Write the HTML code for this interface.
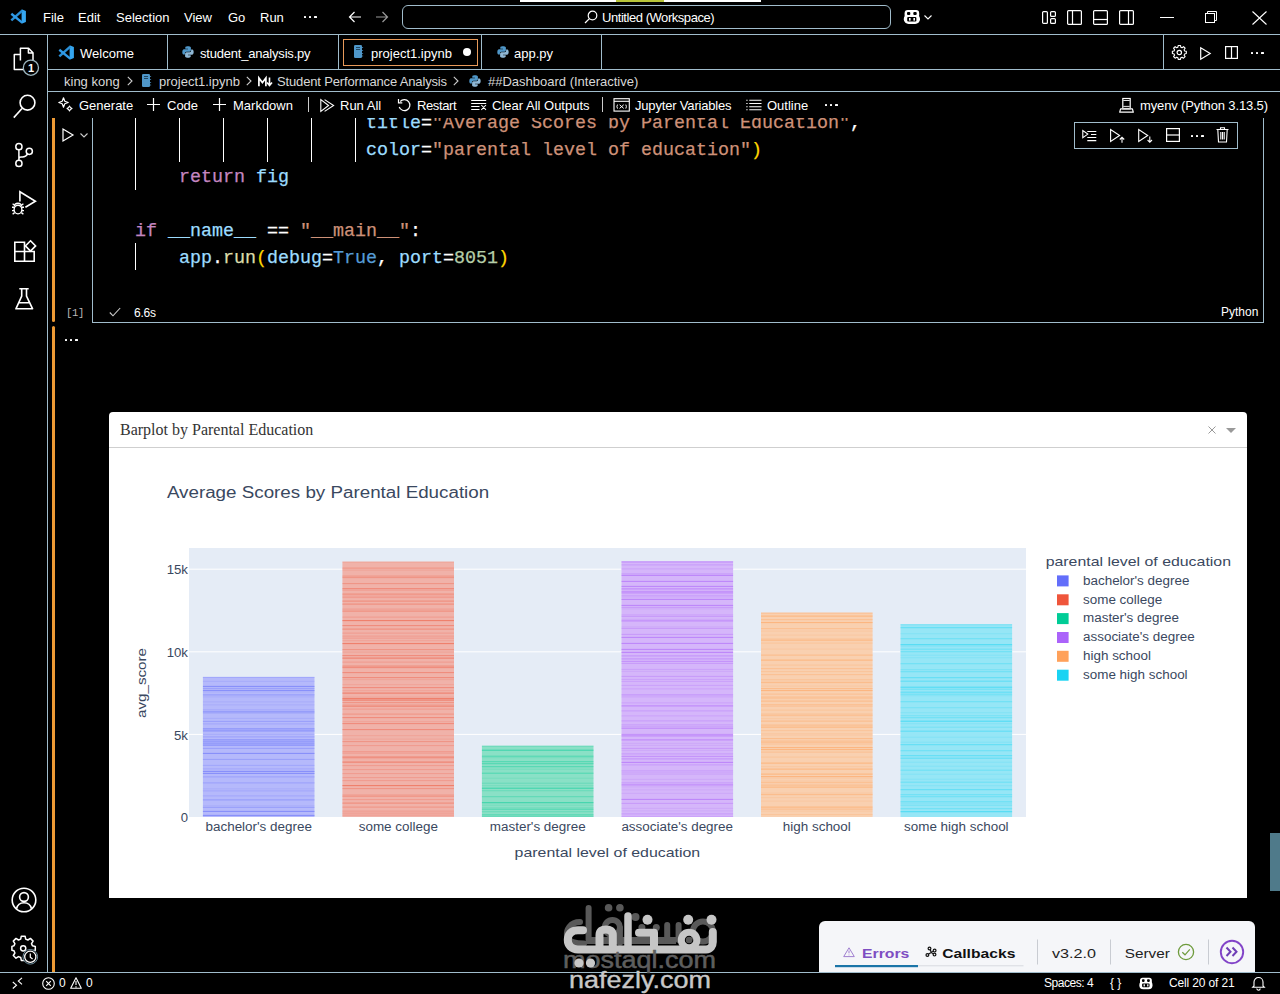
<!DOCTYPE html>
<html><head><meta charset="utf-8">
<style>
*{margin:0;padding:0;box-sizing:border-box}
html,body{width:1280px;height:994px;overflow:hidden;background:#000;font-family:"Liberation Sans",sans-serif;color:#fff}
.a{position:absolute;white-space:nowrap}
.t{font-size:13px;line-height:13px}
.hl{position:absolute;height:1px;background:#a0bccb}
.vl{position:absolute;width:1px;background:#a0bccb}
svg{position:absolute;overflow:visible}
.mono{font-family:"Liberation Mono",monospace}
</style></head><body>
<!-- ===== TITLE BAR ===== -->
<div class="a" style="left:520px;top:0;width:241px;height:2px;background:#fff"></div>
<div class="a" style="left:616px;top:0;width:48px;height:2px;background:#b8c43a"></div>
<svg style="left:10px;top:9px" width="16" height="16" viewBox="0 0 16 16">
 <path d="M11.6 0.3L15.9 2.1V12.9L11.6 14.8Z" fill="#35a6f0"/><path d="M12.2 1.6L1.3 11.3" stroke="#2a8fd6" stroke-width="2.4"/><path d="M12.2 13.6L1.3 4.8" stroke="#2f9ae8" stroke-width="2.4"/>
</svg>
<div class="a t" style="left:43px;top:11px">File</div>
<div class="a t" style="left:78px;top:11px">Edit</div>
<div class="a t" style="left:116px;top:11px">Selection</div>
<div class="a t" style="left:184px;top:11px">View</div>
<div class="a t" style="left:228px;top:11px">Go</div>
<div class="a t" style="left:260px;top:11px">Run</div>
<div class="a" style="left:304.0px;top:16px;width:2.2px;height:2.2px;border-radius:0.5px;background:#fff"></div><div class="a" style="left:309.2px;top:16px;width:2.2px;height:2.2px;border-radius:0.5px;background:#fff"></div><div class="a" style="left:314.4px;top:16px;width:2.2px;height:2.2px;border-radius:0.5px;background:#fff"></div>
<svg style="left:348px;top:11px" width="14" height="12" viewBox="0 0 14 12"><path d="M13 6H1.5M6.5 1L1.5 6L6.5 11" stroke="#fff" stroke-width="1.2" fill="none"/></svg>
<svg style="left:375px;top:11px" width="14" height="12" viewBox="0 0 14 12"><path d="M1 6H12.5M7.5 1L12.5 6L7.5 11" stroke="#9a9a9a" stroke-width="1.2" fill="none"/></svg>
<div class="a" style="left:402px;top:5px;width:489px;height:24px;border:1px solid #a0bccb;border-radius:6px"></div>
<svg style="left:584px;top:10px" width="14" height="14" viewBox="0 0 14 14"><circle cx="8.5" cy="5.5" r="4.3" stroke="#fff" stroke-width="1.2" fill="none"/><path d="M5.4 8.6L1 13" stroke="#fff" stroke-width="1.3"/></svg>
<div class="a t" style="left:602px;top:11px;letter-spacing:-0.45px">Untitled (Workspace)</div>
<!-- copilot -->
<svg style="left:903px;top:9px" width="18" height="16" viewBox="0 0 18 16">
 <rect x="1.6" y="1" width="14.6" height="8" rx="3.2" fill="#fff"/>
 <rect x="0.8" y="5" width="16.2" height="10" rx="4.8" fill="#fff"/>
 <rect x="4" y="2.9" width="3.3" height="3.1" rx="1" fill="#000"/>
 <rect x="10.3" y="2.9" width="3.4" height="3.1" rx="1" fill="#000"/>
 <rect x="4.2" y="8.1" width="9.2" height="4.4" rx="1" fill="#000"/>
 <rect x="6" y="9" width="1.6" height="2.6" fill="#fff"/>
 <rect x="10.4" y="9" width="1.6" height="2.6" fill="#fff"/>
</svg>
<svg style="left:924px;top:15px" width="8" height="5" viewBox="0 0 8 5"><path d="M0.5 0.5L4 4L7.5 0.5" stroke="#fff" stroke-width="1.1" fill="none"/></svg>
<!-- layout icons -->
<svg style="left:1042px;top:11px" width="14" height="13" viewBox="0 0 14 13"><rect x="0.6" y="0.6" width="4.8" height="11.8" rx="1" stroke="#fff" stroke-width="1.2" fill="none"/><rect x="8.6" y="0.6" width="4.8" height="4.8" rx="1" stroke="#fff" stroke-width="1.2" fill="none"/><rect x="8.6" y="7.6" width="4.8" height="4.8" rx="1" stroke="#fff" stroke-width="1.2" fill="none"/></svg>
<svg style="left:1067px;top:10px" width="15" height="15" viewBox="0 0 15 15"><rect x="0.6" y="0.6" width="13.8" height="13.8" rx="1" stroke="#fff" stroke-width="1.2" fill="none"/><path d="M5.5 1V14" stroke="#fff" stroke-width="1.2"/></svg>
<svg style="left:1093px;top:10px" width="15" height="15" viewBox="0 0 15 15"><rect x="0.6" y="0.6" width="13.8" height="13.8" rx="1" stroke="#fff" stroke-width="1.2" fill="none"/><path d="M1 9.5H14" stroke="#fff" stroke-width="1.2"/></svg>
<svg style="left:1119px;top:10px" width="15" height="15" viewBox="0 0 15 15"><rect x="0.6" y="0.6" width="13.8" height="13.8" rx="1" stroke="#fff" stroke-width="1.2" fill="none"/><path d="M9.5 1V14" stroke="#fff" stroke-width="1.2"/></svg>
<!-- window controls -->
<div class="a" style="left:1160px;top:17px;width:14px;height:1px;background:#fff"></div>
<svg style="left:1205px;top:11px" width="12" height="12" viewBox="0 0 12 12"><rect x="0.5" y="2.5" width="9" height="9" stroke="#fff" fill="none"/><path d="M2.5 2.5V0.5H11.5V9.5H9.5" stroke="#fff" fill="none"/></svg>
<svg style="left:1252px;top:11px" width="15" height="14" viewBox="0 0 15 14"><path d="M0.5 0.5L14.5 13.5M14.5 0.5L0.5 13.5" stroke="#fff" stroke-width="1.1"/></svg>

<div class="hl" style="left:0;top:34px;width:1280px"></div>


<!-- ===== ACTIVITY BAR ===== -->
<div class="vl" style="left:47px;top:35px;height:937px"></div>
<!-- explorer -->
<svg style="left:0;top:0" width="48" height="320" viewBox="0 0 48 320">
 <g stroke="#fff" stroke-width="1.5" fill="none" stroke-linejoin="round">
  <path d="M20.4 60.5V48.3H28.6L33 52.7V63M28.4 48.3V52.9H33"/>
  <path d="M20.4 54.4H14.3V69.4H24"/>
 </g>
 <circle cx="30.9" cy="67.7" r="7.6" fill="#000" stroke="#9cb5bf" stroke-width="1.3"/>
 <text x="31" y="71.8" font-size="11" font-family="Liberation Sans" font-weight="bold" fill="#fff" text-anchor="middle">1</text>
 <!-- search -->
 <circle cx="27.5" cy="102.7" r="7.4" stroke="#fff" stroke-width="1.6" fill="none"/>
 <path d="M22 108.5L13.8 117.6" stroke="#fff" stroke-width="1.6"/>
 <!-- scm -->
 <g stroke="#fff" stroke-width="1.5" fill="none">
  <circle cx="18.9" cy="146.7" r="3.1"/><circle cx="18.9" cy="163.4" r="3.1"/><circle cx="29.3" cy="151.3" r="3.1"/>
  <path d="M18.9 149.8V160.3M27.6 153.9C26.5 156 25 156.9 22.5 156.9H21C19.6 156.9 18.9 157.8 18.9 159"/>
 </g>
 <!-- debug -->
 <path d="M19.9 201.5V191.8L35.4 201.3L25.4 207.3" stroke="#fff" stroke-width="1.6" fill="none" stroke-linejoin="miter"/>
 <g stroke="#fff" stroke-width="1.4" fill="none">
  <path d="M14.5 206.2A3.5 3 0 0 1 21.5 206.2"/>
  <ellipse cx="18" cy="209.6" rx="3.9" ry="4.3" fill="#000"/>
  <path d="M12 207.2H14.2M21.8 207.2H24M12 210.6H14M22 210.6H24M12.6 214.2L14.6 212.6M23.4 214.2L21.4 212.6M12.6 203.8L14.6 205.2M23.4 203.8L21.4 205.2"/>
 </g>
 <!-- extensions -->
 <g stroke="#fff" stroke-width="1.6" fill="none" stroke-linejoin="miter">
  <path d="M14.8 242.3H24.5V251.5H34.2V261.3H14.8Z M14.8 251.5H24.5V261.3"/>
  <path d="M30.5 240.8L35.6 245.9L30.5 251L25.4 245.9Z"/>
 </g>
 <!-- testing -->
 <path d="M19.3 288.7H28.7M21.7 288.7V296.1L15.9 308.8H32.6L26.5 296.1V288.7M19.1 302.7H29.4" stroke="#fff" stroke-width="1.6" fill="none" stroke-linejoin="round"/>
</svg>
<!-- account -->
<svg style="left:11px;top:887px" width="26" height="26" viewBox="0 0 26 26">
 <circle cx="13" cy="13" r="11.8" stroke="#fff" stroke-width="1.6" fill="none"/>
 <circle cx="13" cy="10" r="4.4" stroke="#fff" stroke-width="1.6" fill="none"/>
 <path d="M5.5 21.8C6.5 17.5 9 15.8 13 15.8C17 15.8 19.5 17.5 20.5 21.8" stroke="#fff" stroke-width="1.6" fill="none"/>
</svg>
<!-- manage gear -->
<svg style="left:11px;top:935px" width="27" height="31" viewBox="0 0 27 31">
 <path d="M10.3 1.2H14.1L14.7 4.1L16.9 5L19.4 3.4L22.1 6.1L20.5 8.6L21.4 10.8L24.3 11.4V15.2L21.4 15.8L20.5 18L22.1 20.5L19.4 23.2L16.9 21.6L14.7 22.5L14.1 25.4H10.3L9.7 22.5L7.5 21.6L5 23.2L2.3 20.5L3.9 18L3 15.8L0.9 15.2V11.4L3 10.8L3.9 8.6L2.3 6.1L5 3.4L7.5 5L9.7 4.1Z" stroke="#fff" stroke-width="1.5" fill="none" stroke-linejoin="round"/>
 <circle cx="12.2" cy="13.3" r="2.6" stroke="#fff" stroke-width="1.5" fill="none"/>
 <circle cx="19.3" cy="21.8" r="7.3" fill="#000" stroke="#6f8fa0" stroke-width="1"/>
 <circle cx="19.3" cy="21.8" r="5.6" fill="#000" stroke="#fff" stroke-width="1.3"/>
 <path d="M19.3 18.5V22.2L21.6 24" stroke="#fff" stroke-width="1.2" fill="none"/>
</svg>

<!-- ===== TAB BAR ===== -->
<div class="vl" style="left:167px;top:35px;height:34px"></div>
<div class="vl" style="left:338px;top:35px;height:34px"></div>
<div class="vl" style="left:481px;top:35px;height:34px"></div>
<div class="vl" style="left:601px;top:35px;height:34px"></div>
<div class="vl" style="left:1163px;top:35px;height:34px"></div>
<div class="hl" style="left:48px;top:69px;width:1232px"></div>
<svg style="left:58px;top:45px" width="16" height="16" viewBox="0 0 16 16">
 <path d="M11.6 0.3L15.9 2.1V12.9L11.6 14.8Z" fill="#35a6f0"/><path d="M12.2 1.6L1.3 11.3" stroke="#2a8fd6" stroke-width="2.4"/><path d="M12.2 13.6L1.3 4.8" stroke="#2f9ae8" stroke-width="2.4"/>
</svg>
<div class="a t" style="left:80px;top:47px">Welcome</div>
<svg style="left:182px;top:46px" width="12" height="12" viewBox="0 0 12 12">
 <path d="M5.9 0.3C3.2 0.3 3.3 1.5 3.3 1.5V2.8H6V3.2H2.2C2.2 3.2 0.3 3 0.3 5.9C0.3 8.7 1.9 8.6 1.9 8.6H2.9V7.3C2.9 7.3 2.8 5.7 4.5 5.7H7.3C7.3 5.7 8.9 5.7 8.9 4.2V1.8C8.9 1.8 9.1 0.3 5.9 0.3Z" fill="#4f97c9"/>
 <path d="M6.1 11.7C8.8 11.7 8.7 10.5 8.7 10.5V9.2H6V8.8H9.8C9.8 8.8 11.7 9 11.7 6.1C11.7 3.3 10.1 3.4 10.1 3.4H9.1V4.7C9.1 4.7 9.2 6.3 7.5 6.3H4.7C4.7 6.3 3.1 6.3 3.1 7.8V10.2C3.1 10.2 2.9 11.7 6.1 11.7Z" fill="#8fb8d6"/>
</svg>
<div class="a t" style="left:200px;top:47px;letter-spacing:-0.2px">student_analysis.py</div>
<div class="a" style="left:343px;top:39px;width:135px;height:27px;border:1px solid #e89a5a"></div>
<svg style="left:354px;top:45px" width="9" height="13" viewBox="0 0 9 13">
 <rect x="0" y="0" width="8" height="13" rx="1.3" fill="#4f97c9"/>
 <path d="M2 2.5H6M2 4.5H6" stroke="#1c3d55" stroke-width="0.9"/>
 <path d="M8.6 2V3M8.6 5V6M8.6 8V9M8.6 10.5V11.5" stroke="#4f97c9" stroke-width="0.8"/>
</svg>
<div class="a t" style="left:371px;top:47px">project1.ipynb</div>
<div class="a" style="left:463px;top:48px;width:8px;height:8px;border-radius:50%;background:#fff"></div>
<svg style="left:497px;top:46px" width="12" height="12" viewBox="0 0 12 12">
 <path d="M5.9 0.3C3.2 0.3 3.3 1.5 3.3 1.5V2.8H6V3.2H2.2C2.2 3.2 0.3 3 0.3 5.9C0.3 8.7 1.9 8.6 1.9 8.6H2.9V7.3C2.9 7.3 2.8 5.7 4.5 5.7H7.3C7.3 5.7 8.9 5.7 8.9 4.2V1.8C8.9 1.8 9.1 0.3 5.9 0.3Z" fill="#4f97c9"/>
 <path d="M6.1 11.7C8.8 11.7 8.7 10.5 8.7 10.5V9.2H6V8.8H9.8C9.8 8.8 11.7 9 11.7 6.1C11.7 3.3 10.1 3.4 10.1 3.4H9.1V4.7C9.1 4.7 9.2 6.3 7.5 6.3H4.7C4.7 6.3 3.1 6.3 3.1 7.8V10.2C3.1 10.2 2.9 11.7 6.1 11.7Z" fill="#8fb8d6"/>
</svg>
<div class="a t" style="left:514px;top:47px">app.py</div>
<!-- tab actions -->
<svg style="left:1172px;top:45px" width="15" height="15" viewBox="0 0 15 15">
 <path d="M6.3 0.8H8.7L9.1 2.6L10.4 3.2L12 2.1L13.7 3.8L12.6 5.4L13.2 6.7L15 7.1V9.5L13.2 9.9L12.6 11.2L13.7 12.8L12 14.5L10.4 13.4L9.1 14L8.7 15.8H6.3L5.9 14L4.6 13.4L3 14.5L1.3 12.8L2.4 11.2L1.8 9.9L0 9.5V7.1L1.8 6.7L2.4 5.4L1.3 3.8L3 2.1L4.6 3.2L5.9 2.6Z" transform="scale(0.93) translate(0.4,-0.3)" stroke="#fff" stroke-width="1.2" fill="none" stroke-linejoin="round"/>
 <circle cx="7.3" cy="7.5" r="2.2" stroke="#fff" stroke-width="1.2" fill="none"/>
</svg>
<svg style="left:1200px;top:47px" width="11" height="13" viewBox="0 0 11 13"><path d="M0.7 0.8V12.2L10.2 6.5Z" stroke="#fff" stroke-width="1.2" fill="none" stroke-linejoin="miter"/></svg>
<svg style="left:1225px;top:46px" width="13" height="13" viewBox="0 0 13 13"><rect x="0.6" y="0.6" width="11.8" height="11.8" stroke="#fff" stroke-width="1.2" fill="none"/><path d="M6.5 1V12" stroke="#fff" stroke-width="1.2"/></svg>
<div class="a" style="left:1251.0px;top:52px;width:2.2px;height:2.2px;border-radius:0.5px;background:#fff"></div><div class="a" style="left:1256.2px;top:52px;width:2.2px;height:2.2px;border-radius:0.5px;background:#fff"></div><div class="a" style="left:1261.4px;top:52px;width:2.2px;height:2.2px;border-radius:0.5px;background:#fff"></div>

<!-- ===== BREADCRUMBS ===== -->
<div class="hl" style="left:48px;top:91px;width:1232px"></div>
<div class="a t" style="left:64px;top:75px;color:#d8d8d8">king kong</div>
<svg style="left:127px;top:76px" width="6" height="10" viewBox="0 0 6 10"><path d="M0.8 0.8L5 5L0.8 9.2" stroke="#ccc" stroke-width="1.1" fill="none"/></svg>
<svg style="left:142px;top:74px" width="9" height="13" viewBox="0 0 9 13">
 <rect x="0" y="0" width="8" height="13" rx="1.3" fill="#4f97c9"/>
 <path d="M2 2.5H6M2 4.5H6" stroke="#1c3d55" stroke-width="0.9"/>
 <path d="M8.6 2V3M8.6 5V6M8.6 8V9M8.6 10.5V11.5" stroke="#4f97c9" stroke-width="0.8"/>
</svg>
<div class="a t" style="left:159px;top:75px;color:#d8d8d8">project1.ipynb</div>
<svg style="left:246px;top:76px" width="6" height="10" viewBox="0 0 6 10"><path d="M0.8 0.8L5 5L0.8 9.2" stroke="#ccc" stroke-width="1.1" fill="none"/></svg>
<svg style="left:258px;top:77px" width="15" height="10" viewBox="0 0 15 10"><path d="M0.9 9.2V1L4.4 5.5L7.9 1V9.2" stroke="#fff" stroke-width="1.7" fill="none" stroke-linejoin="miter"/><path d="M11.5 0.5V8M9 5.5L11.5 8.5L14 5.5" stroke="#fff" stroke-width="1.6" fill="none"/></svg>
<div class="a t" style="left:277px;top:75px;color:#d8d8d8;letter-spacing:-0.15px">Student Performance Analysis</div>
<svg style="left:453px;top:76px" width="6" height="10" viewBox="0 0 6 10"><path d="M0.8 0.8L5 5L0.8 9.2" stroke="#ccc" stroke-width="1.1" fill="none"/></svg>
<svg style="left:469px;top:75px" width="12" height="12" viewBox="0 0 12 12">
 <path d="M5.9 0.3C3.2 0.3 3.3 1.5 3.3 1.5V2.8H6V3.2H2.2C2.2 3.2 0.3 3 0.3 5.9C0.3 8.7 1.9 8.6 1.9 8.6H2.9V7.3C2.9 7.3 2.8 5.7 4.5 5.7H7.3C7.3 5.7 8.9 5.7 8.9 4.2V1.8C8.9 1.8 9.1 0.3 5.9 0.3Z" fill="#4f97c9"/>
 <path d="M6.1 11.7C8.8 11.7 8.7 10.5 8.7 10.5V9.2H6V8.8H9.8C9.8 8.8 11.7 9 11.7 6.1C11.7 3.3 10.1 3.4 10.1 3.4H9.1V4.7C9.1 4.7 9.2 6.3 7.5 6.3H4.7C4.7 6.3 3.1 6.3 3.1 7.8V10.2C3.1 10.2 2.9 11.7 6.1 11.7Z" fill="#8fb8d6"/>
</svg>
<div class="a t" style="left:488px;top:75px;color:#d8d8d8">##Dashboard (Interactive)</div>


<!-- ===== NOTEBOOK TOOLBAR ===== -->
<svg style="left:58px;top:97px" width="15" height="15" viewBox="0 0 15 15">
 <path d="M5.5 0.8L6.8 4.2L10.2 5.5L6.8 6.8L5.5 10.2L4.2 6.8L0.8 5.5L4.2 4.2Z" stroke="#fff" stroke-width="1.2" fill="none" stroke-linejoin="round"/>
 <path d="M11.5 9L12.4 10.6L14 11.5L12.4 12.4L11.5 14L10.6 12.4L9 11.5L10.6 10.6Z" stroke="#fff" stroke-width="1.1" fill="none" stroke-linejoin="round"/>
</svg>
<div class="a t" style="left:79px;top:99px">Generate</div>
<svg style="left:147px;top:98px" width="13" height="13" viewBox="0 0 13 13"><path d="M6.5 0V13M0 6.5H13" stroke="#fff" stroke-width="1.2"/></svg>
<div class="a t" style="left:167px;top:99px">Code</div>
<svg style="left:213px;top:98px" width="13" height="13" viewBox="0 0 13 13"><path d="M6.5 0V13M0 6.5H13" stroke="#fff" stroke-width="1.2"/></svg>
<div class="a t" style="left:233px;top:99px">Markdown</div>
<div class="vl" style="left:308px;top:97px;height:15px;background:#ccc"></div>
<svg style="left:320px;top:99px" width="15" height="13" viewBox="0 0 15 13"><path d="M0.8 0.6V12.4L8.6 6.5Z M4.6 0.6L13.6 6.5L4.6 12.4" stroke="#fff" stroke-width="1.1" fill="none" stroke-linejoin="miter"/></svg>
<div class="a t" style="left:340px;top:99px">Run All</div>
<svg style="left:397px;top:98px" width="15" height="15" viewBox="0 0 15 15"><path d="M3.2 3.5A5.5 5.5 0 1 1 2.2 9" stroke="#fff" stroke-width="1.2" fill="none"/><path d="M1.5 1V4.8H5.3" stroke="#fff" stroke-width="1.2" fill="none"/></svg>
<div class="a t" style="left:417px;top:99px;letter-spacing:-0.4px">Restart</div>
<svg style="left:0;top:0" width="600" height="130" viewBox="0 0 600 130"><path d="M471.2 100.5H486.2M471.2 103.5H486.2M471.2 106.5H479.5M471.2 109.5H479.5M481.3 105L486 109.8M486 105L481.3 109.8" stroke="#fff" stroke-width="1.05"/></svg>
<div class="a t" style="left:492px;top:99px">Clear All Outputs</div>
<div class="vl" style="left:602px;top:97px;height:15px;background:#ccc"></div>
<svg style="left:0;top:0" width="800" height="130" viewBox="0 0 800 130"><rect x="614" y="98.7" width="15.3" height="12.4" stroke="#fff" stroke-width="1.1" fill="none"/><path d="M614 101.3H629.3" stroke="#fff" stroke-width="1.1"/><path d="M617.5 104.6Q616.3 106.5 617.5 108.6M625.8 104.6Q627 106.5 625.8 108.6M619.6 104.8L623.7 108.4M623.7 104.8L619.6 108.4" stroke="#fff" stroke-width="1" fill="none"/><path d="M746.3 100.3H747.6M746.3 103.5H747.6M746.3 106.7H747.6M746.3 109.8H747.6M749.3 100.3H761.5M749.3 103.5H761.5M749.3 106.7H761.5M749.3 109.8H761.5" stroke="#fff" stroke-width="1.05"/></svg>
<div class="a t" style="left:635px;top:99px;letter-spacing:-0.18px">Jupyter Variables</div>

<div class="a t" style="left:767px;top:99px">Outline</div>
<div class="a" style="left:825.0px;top:104px;width:2.2px;height:2.2px;border-radius:0.5px;background:#fff"></div><div class="a" style="left:830.2px;top:104px;width:2.2px;height:2.2px;border-radius:0.5px;background:#fff"></div><div class="a" style="left:835.4px;top:104px;width:2.2px;height:2.2px;border-radius:0.5px;background:#fff"></div>
<svg style="left:1118px;top:96px" width="17" height="18" viewBox="0 0 17 18"><rect x="4.8" y="2.5" width="7.4" height="10.6" stroke="#fff" stroke-width="1.2" fill="#000"/><path d="M5.3 4.5H11.7M5.3 10.4H11.7M5.3 12.4H11.7" stroke="#fff" stroke-width="0.9"/><path d="M4.3 12.8H2.6L1.7 16.2H15.3L14.4 12.8H12.7" stroke="#fff" stroke-width="1.2" fill="none" stroke-linejoin="round"/></svg>
<div class="a t" style="left:1140px;top:99px;letter-spacing:-0.14px">myenv (Python 3.13.5)</div>

<!-- ===== NOTEBOOK CONTENT ===== -->
<div class="a" style="left:52px;top:118px;width:3px;height:204px;background:#ee9a35;border-radius:0 0 2px 2px"></div>
<div class="a" style="left:52px;top:326px;width:3px;height:646px;background:#ee9a35;border-radius:2px 2px 0 0"></div>
<div class="vl" style="left:92px;top:118px;height:205px"></div>
<div class="vl" style="left:1263px;top:118px;height:205px"></div>
<div class="hl" style="left:92px;top:322px;width:1172px"></div>
<svg style="left:62px;top:128px" width="12" height="14" viewBox="0 0 12 14"><path d="M1 1V13L11 7Z" stroke="#fff" stroke-width="1.2" fill="none"/></svg>
<svg style="left:80px;top:133px" width="8" height="5" viewBox="0 0 8 5"><path d="M0.5 0.5L4 4L7.5 0.5" stroke="#ccc" stroke-width="1.1" fill="none"/></svg>
<!-- indent guides -->
<div class="a" style="left:135px;top:118px;width:1px;height:72px;background:#fff"></div>
<div class="a" style="left:179px;top:118px;width:1px;height:44px;background:#fff"></div>
<div class="a" style="left:223px;top:118px;width:1px;height:44px;background:#fff"></div>
<div class="a" style="left:267px;top:118px;width:1px;height:44px;background:#fff"></div>
<div class="a" style="left:311px;top:118px;width:1px;height:44px;background:#fff"></div>
<div class="a" style="left:355px;top:118px;width:1px;height:44px;background:#fff"></div>
<div class="a" style="left:135px;top:243px;width:1px;height:27px;background:#fff"></div>
<!-- code -->
<div class="a" style="left:93px;top:118px;width:1000px;height:160px;overflow:hidden">
<div class="mono" style="position:absolute;left:42px;top:-8px;font-size:18.33px;-webkit-text-stroke:0.25px currentColor;line-height:27px;white-space:pre;color:#fff"><span>                     </span><span style="color:#9cdcfe">title</span>=<span style="color:#ce9178">"Average Scores by Parental Education"</span>,
<span>                     </span><span style="color:#9cdcfe">color</span>=<span style="color:#ce9178">"parental level of education"</span><span style="color:#ffd700">)</span>
<span>    </span><span style="color:#c586c0">return</span> <span style="color:#9cdcfe">fig</span>

<span style="color:#c586c0">if</span> <span style="color:#9cdcfe">__name__</span> == <span style="color:#ce9178">"__main__"</span>:
<span>    </span><span style="color:#9cdcfe">app</span>.<span style="color:#dcdcaa">run</span><span style="color:#ffd700">(</span><span style="color:#9cdcfe">debug</span>=<span style="color:#569cd6">True</span>, <span style="color:#9cdcfe">port</span>=<span style="color:#b5cea8">8051</span><span style="color:#ffd700">)</span>
</div></div>
<div class="a mono" style="left:66px;top:307px;font-size:10.5px;line-height:12px;color:#bbb;letter-spacing:-0.3px">[1]</div>
<svg style="left:109px;top:307px" width="12" height="10" viewBox="0 0 12 10"><path d="M0.8 5.5L4 8.8L11.2 1" stroke="#ccc" stroke-width="1.1" fill="none"/></svg>
<div class="a" style="left:134px;top:307px;font-size:12px;line-height:12px;color:#fff;letter-spacing:-0.2px">6.6s</div>
<div class="a" style="left:1221px;top:306px;font-size:12px;line-height:12px;color:#fff">Python</div>
<!-- cell toolbar -->
<div class="a" style="left:1074px;top:122px;width:164px;height:27px;border:1px solid #a0bccb;background:#000"></div>
<svg style="left:0;top:0" width="1280" height="160" viewBox="0 0 1280 160">
 <g stroke="#fff" stroke-width="1.1" fill="none" stroke-linejoin="miter">
  <path d="M1082.8 130.6V137.6L1087.8 134.1Z"/>
  <path d="M1087.3 131.5H1096.3M1091 134.5H1096.3M1087.3 137.5H1096.3M1087.3 140.6H1096.3"/>
  <path d="M1110.6 129.6V141.4L1119.6 135.5Z"/>
  <path d="M1122 142.8V137.3M1119.8 139.5L1122 137.2L1124.2 139.5"/>
  <path d="M1138.7 129.6V141.4L1147.7 135.5Z"/>
  <path d="M1149.8 136.5V142.2M1147.6 140L1149.8 142.3L1152 140"/>
 </g>
</svg>
<svg style="left:1166px;top:128px" width="14" height="14" viewBox="0 0 14 14"><rect x="0.6" y="0.6" width="12.8" height="12.8" stroke="#fff" stroke-width="1.2" fill="none"/><path d="M0.6 7H13.4" stroke="#fff" stroke-width="1.2"/></svg>
<div class="a" style="left:1191.0px;top:135px;width:2.2px;height:2.2px;border-radius:0.5px;background:#fff"></div><div class="a" style="left:1196.2px;top:135px;width:2.2px;height:2.2px;border-radius:0.5px;background:#fff"></div><div class="a" style="left:1201.4px;top:135px;width:2.2px;height:2.2px;border-radius:0.5px;background:#fff"></div>
<svg style="left:1216px;top:127px" width="13" height="16" viewBox="0 0 13 16"><path d="M0.5 2.5H12.5M4.5 2.5V0.7H8.5V2.5M1.8 2.5L2.5 15H10.5L11.2 2.5M4.8 5V12.5M6.5 5V12.5M8.2 5V12.5" stroke="#fff" stroke-width="1.1" fill="none"/></svg>
<div class="a" style="left:65.0px;top:339px;width:2.2px;height:2.2px;border-radius:0.5px;background:#fff"></div><div class="a" style="left:70.2px;top:339px;width:2.2px;height:2.2px;border-radius:0.5px;background:#fff"></div><div class="a" style="left:75.4px;top:339px;width:2.2px;height:2.2px;border-radius:0.5px;background:#fff"></div>
<!-- scrollbar -->
<div class="a" style="left:1270px;top:833px;width:10px;height:58px;background:#4f7a8a"></div>


<!-- ===== DASH OUTPUT ===== -->
<div class="a" style="left:109px;top:448px;width:1138px;height:450px;background:#fff"></div>
<div class="a" style="left:109px;top:412px;width:1138px;height:36px;background:#fff;border-radius:4px 4px 0 0;border-bottom:1px solid #cfcfcf"></div>
<div class="a" style="left:120px;top:421px;font-family:'Liberation Serif',serif;font-size:16px;line-height:18px;color:#333">Barplot by Parental Education</div>
<svg style="left:1208px;top:426px" width="8" height="8" viewBox="0 0 8 8"><path d="M0.5 0.5L7.5 7.5M7.5 0.5L0.5 7.5" stroke="#999" stroke-width="1"/></svg>
<svg style="left:1226px;top:428px" width="10" height="5" viewBox="0 0 10 5"><path d="M0 0H10L5 5Z" fill="#999"/></svg>
<!--CHART-->
<svg style="left:0;top:0" width="1280" height="994" viewBox="0 0 1280 994">
<rect x="189" y="548" width="837" height="269" fill="#e5ecf6"/>
<rect x="189" y="733.9" width="837" height="1" fill="#fff"/>
<rect x="189" y="651.3" width="837" height="1" fill="#fff"/>
<rect x="189" y="568.7" width="837" height="1" fill="#fff"/>
<rect x="202.9" y="676.9" width="111.6" height="140.1" fill="#b5b9fb"/>
<rect x="202.9" y="676.9" width="111.6" height="1" fill="#636efa" opacity="0.25"/><rect x="202.9" y="680.9" width="111.6" height="1" fill="#636efa" opacity="0.15"/><rect x="202.9" y="685.9" width="111.6" height="1" fill="#636efa" opacity="0.6"/><rect x="202.9" y="687.9" width="111.6" height="1" fill="#636efa" opacity="0.35"/><rect x="202.9" y="689.9" width="111.6" height="1" fill="#636efa" opacity="0.6"/><rect x="202.9" y="691.4" width="111.6" height="1" fill="#636efa" opacity="0.15"/><rect x="202.9" y="694.4" width="111.6" height="1" fill="#636efa" opacity="0.45"/><rect x="202.9" y="696.4" width="111.6" height="1" fill="#636efa" opacity="0.15"/><rect x="202.9" y="701.4" width="111.6" height="1" fill="#636efa" opacity="0.15"/><rect x="202.9" y="704.4" width="111.6" height="1" fill="#636efa" opacity="0.15"/><rect x="202.9" y="709.4" width="111.6" height="1" fill="#636efa" opacity="0.25"/><rect x="202.9" y="711.4" width="111.6" height="1" fill="#636efa" opacity="0.6"/><rect x="202.9" y="712.9" width="111.6" height="1" fill="#636efa" opacity="0.15"/><rect x="202.9" y="717.9" width="111.6" height="1" fill="#636efa" opacity="0.15"/><rect x="202.9" y="720.9" width="111.6" height="1" fill="#636efa" opacity="0.35"/><rect x="202.9" y="723.4" width="111.6" height="1" fill="#636efa" opacity="0.25"/><rect x="202.9" y="728.4" width="111.6" height="1" fill="#636efa" opacity="0.6"/><rect x="202.9" y="730.4" width="111.6" height="1" fill="#636efa" opacity="0.6"/><rect x="202.9" y="733.9" width="111.6" height="1" fill="#636efa" opacity="0.15"/><rect x="202.9" y="736.4" width="111.6" height="1" fill="#636efa" opacity="0.35"/><rect x="202.9" y="739.4" width="111.6" height="1" fill="#636efa" opacity="0.6"/><rect x="202.9" y="741.4" width="111.6" height="1" fill="#636efa" opacity="0.6"/><rect x="202.9" y="743.4" width="111.6" height="1" fill="#636efa" opacity="0.6"/><rect x="202.9" y="744.9" width="111.6" height="1" fill="#636efa" opacity="0.45"/><rect x="202.9" y="747.9" width="111.6" height="1" fill="#636efa" opacity="0.35"/><rect x="202.9" y="752.9" width="111.6" height="1" fill="#636efa" opacity="0.6"/><rect x="202.9" y="758.9" width="111.6" height="1" fill="#636efa" opacity="0.35"/><rect x="202.9" y="764.9" width="111.6" height="1" fill="#636efa" opacity="0.25"/><rect x="202.9" y="768.4" width="111.6" height="1" fill="#636efa" opacity="0.25"/><rect x="202.9" y="770.9" width="111.6" height="1" fill="#636efa" opacity="0.6"/><rect x="202.9" y="772.9" width="111.6" height="1" fill="#636efa" opacity="0.6"/><rect x="202.9" y="776.4" width="111.6" height="1" fill="#636efa" opacity="0.35"/><rect x="202.9" y="782.4" width="111.6" height="1" fill="#636efa" opacity="0.35"/><rect x="202.9" y="788.4" width="111.6" height="1" fill="#636efa" opacity="0.15"/><rect x="202.9" y="790.4" width="111.6" height="1" fill="#636efa" opacity="0.25"/><rect x="202.9" y="795.4" width="111.6" height="1" fill="#636efa" opacity="0.25"/><rect x="202.9" y="799.4" width="111.6" height="1" fill="#636efa" opacity="0.45"/><rect x="202.9" y="805.4" width="111.6" height="1" fill="#636efa" opacity="0.15"/><rect x="202.9" y="806.9" width="111.6" height="1" fill="#636efa" opacity="0.35"/><rect x="202.9" y="810.9" width="111.6" height="1" fill="#636efa" opacity="0.6"/><rect x="202.9" y="814.9" width="111.6" height="1" fill="#636efa" opacity="0.6"/>
<rect x="342.4" y="561.6" width="111.6" height="255.4" fill="#f0b2a9"/>
<rect x="342.4" y="561.6" width="111.6" height="1" fill="#ef553b" opacity="0.15"/><rect x="342.4" y="567.6" width="111.6" height="1" fill="#ef553b" opacity="0.35"/><rect x="342.4" y="569.6" width="111.6" height="1" fill="#ef553b" opacity="0.15"/><rect x="342.4" y="575.6" width="111.6" height="1" fill="#ef553b" opacity="0.35"/><rect x="342.4" y="577.1" width="111.6" height="1" fill="#ef553b" opacity="0.35"/><rect x="342.4" y="583.1" width="111.6" height="1" fill="#ef553b" opacity="0.35"/><rect x="342.4" y="588.1" width="111.6" height="1" fill="#ef553b" opacity="0.45"/><rect x="342.4" y="589.6" width="111.6" height="1" fill="#ef553b" opacity="0.25"/><rect x="342.4" y="593.6" width="111.6" height="1" fill="#ef553b" opacity="0.45"/><rect x="342.4" y="595.6" width="111.6" height="1" fill="#ef553b" opacity="0.25"/><rect x="342.4" y="597.1" width="111.6" height="1" fill="#ef553b" opacity="0.25"/><rect x="342.4" y="600.6" width="111.6" height="1" fill="#ef553b" opacity="0.45"/><rect x="342.4" y="603.6" width="111.6" height="1" fill="#ef553b" opacity="0.45"/><rect x="342.4" y="608.6" width="111.6" height="1" fill="#ef553b" opacity="0.25"/><rect x="342.4" y="610.6" width="111.6" height="1" fill="#ef553b" opacity="0.45"/><rect x="342.4" y="616.6" width="111.6" height="1" fill="#ef553b" opacity="0.25"/><rect x="342.4" y="620.1" width="111.6" height="1" fill="#ef553b" opacity="0.6"/><rect x="342.4" y="625.1" width="111.6" height="1" fill="#ef553b" opacity="0.45"/><rect x="342.4" y="628.6" width="111.6" height="1" fill="#ef553b" opacity="0.45"/><rect x="342.4" y="632.6" width="111.6" height="1" fill="#ef553b" opacity="0.25"/><rect x="342.4" y="635.6" width="111.6" height="1" fill="#ef553b" opacity="0.25"/><rect x="342.4" y="637.6" width="111.6" height="1" fill="#ef553b" opacity="0.25"/><rect x="342.4" y="640.1" width="111.6" height="1" fill="#ef553b" opacity="0.15"/><rect x="342.4" y="643.1" width="111.6" height="1" fill="#ef553b" opacity="0.6"/><rect x="342.4" y="649.1" width="111.6" height="1" fill="#ef553b" opacity="0.35"/><rect x="342.4" y="651.6" width="111.6" height="1" fill="#ef553b" opacity="0.15"/><rect x="342.4" y="655.1" width="111.6" height="1" fill="#ef553b" opacity="0.45"/><rect x="342.4" y="657.6" width="111.6" height="1" fill="#ef553b" opacity="0.6"/><rect x="342.4" y="661.6" width="111.6" height="1" fill="#ef553b" opacity="0.25"/><rect x="342.4" y="665.6" width="111.6" height="1" fill="#ef553b" opacity="0.45"/><rect x="342.4" y="667.1" width="111.6" height="1" fill="#ef553b" opacity="0.45"/><rect x="342.4" y="672.1" width="111.6" height="1" fill="#ef553b" opacity="0.45"/><rect x="342.4" y="677.1" width="111.6" height="1" fill="#ef553b" opacity="0.45"/><rect x="342.4" y="679.1" width="111.6" height="1" fill="#ef553b" opacity="0.15"/><rect x="342.4" y="684.1" width="111.6" height="1" fill="#ef553b" opacity="0.15"/><rect x="342.4" y="687.1" width="111.6" height="1" fill="#ef553b" opacity="0.45"/><rect x="342.4" y="690.1" width="111.6" height="1" fill="#ef553b" opacity="0.15"/><rect x="342.4" y="692.6" width="111.6" height="1" fill="#ef553b" opacity="0.6"/><rect x="342.4" y="696.6" width="111.6" height="1" fill="#ef553b" opacity="0.15"/><rect x="342.4" y="698.1" width="111.6" height="1" fill="#ef553b" opacity="0.6"/><rect x="342.4" y="699.6" width="111.6" height="1" fill="#ef553b" opacity="0.6"/><rect x="342.4" y="702.1" width="111.6" height="1" fill="#ef553b" opacity="0.35"/><rect x="342.4" y="704.1" width="111.6" height="1" fill="#ef553b" opacity="0.15"/><rect x="342.4" y="705.6" width="111.6" height="1" fill="#ef553b" opacity="0.6"/><rect x="342.4" y="708.6" width="111.6" height="1" fill="#ef553b" opacity="0.25"/><rect x="342.4" y="713.6" width="111.6" height="1" fill="#ef553b" opacity="0.35"/><rect x="342.4" y="717.1" width="111.6" height="1" fill="#ef553b" opacity="0.45"/><rect x="342.4" y="721.1" width="111.6" height="1" fill="#ef553b" opacity="0.15"/><rect x="342.4" y="723.1" width="111.6" height="1" fill="#ef553b" opacity="0.45"/><rect x="342.4" y="729.1" width="111.6" height="1" fill="#ef553b" opacity="0.45"/><rect x="342.4" y="735.1" width="111.6" height="1" fill="#ef553b" opacity="0.15"/><rect x="342.4" y="738.6" width="111.6" height="1" fill="#ef553b" opacity="0.15"/><rect x="342.4" y="741.1" width="111.6" height="1" fill="#ef553b" opacity="0.35"/><rect x="342.4" y="745.1" width="111.6" height="1" fill="#ef553b" opacity="0.25"/><rect x="342.4" y="751.1" width="111.6" height="1" fill="#ef553b" opacity="0.25"/><rect x="342.4" y="752.6" width="111.6" height="1" fill="#ef553b" opacity="0.25"/><rect x="342.4" y="756.6" width="111.6" height="1" fill="#ef553b" opacity="0.6"/><rect x="342.4" y="758.1" width="111.6" height="1" fill="#ef553b" opacity="0.15"/><rect x="342.4" y="761.6" width="111.6" height="1" fill="#ef553b" opacity="0.6"/><rect x="342.4" y="765.1" width="111.6" height="1" fill="#ef553b" opacity="0.25"/><rect x="342.4" y="769.1" width="111.6" height="1" fill="#ef553b" opacity="0.25"/><rect x="342.4" y="773.1" width="111.6" height="1" fill="#ef553b" opacity="0.25"/><rect x="342.4" y="777.1" width="111.6" height="1" fill="#ef553b" opacity="0.25"/><rect x="342.4" y="780.1" width="111.6" height="1" fill="#ef553b" opacity="0.25"/><rect x="342.4" y="785.1" width="111.6" height="1" fill="#ef553b" opacity="0.6"/><rect x="342.4" y="788.1" width="111.6" height="1" fill="#ef553b" opacity="0.35"/><rect x="342.4" y="794.1" width="111.6" height="1" fill="#ef553b" opacity="0.15"/><rect x="342.4" y="795.6" width="111.6" height="1" fill="#ef553b" opacity="0.45"/><rect x="342.4" y="799.1" width="111.6" height="1" fill="#ef553b" opacity="0.25"/><rect x="342.4" y="802.6" width="111.6" height="1" fill="#ef553b" opacity="0.45"/><rect x="342.4" y="806.6" width="111.6" height="1" fill="#ef553b" opacity="0.35"/><rect x="342.4" y="810.6" width="111.6" height="1" fill="#ef553b" opacity="0.25"/><rect x="342.4" y="812.6" width="111.6" height="1" fill="#ef553b" opacity="0.25"/><rect x="342.4" y="814.6" width="111.6" height="1" fill="#ef553b" opacity="0.25"/>
<rect x="481.9" y="745.7" width="111.6" height="71.3" fill="#8ae0c6"/>
<rect x="481.9" y="745.7" width="111.6" height="1" fill="#00cc96" opacity="0.25"/><rect x="481.9" y="749.7" width="111.6" height="1" fill="#00cc96" opacity="0.6"/><rect x="481.9" y="755.7" width="111.6" height="1" fill="#00cc96" opacity="0.45"/><rect x="481.9" y="757.2" width="111.6" height="1" fill="#00cc96" opacity="0.15"/><rect x="481.9" y="761.2" width="111.6" height="1" fill="#00cc96" opacity="0.45"/><rect x="481.9" y="763.2" width="111.6" height="1" fill="#00cc96" opacity="0.45"/><rect x="481.9" y="766.2" width="111.6" height="1" fill="#00cc96" opacity="0.45"/><rect x="481.9" y="768.7" width="111.6" height="1" fill="#00cc96" opacity="0.15"/><rect x="481.9" y="772.7" width="111.6" height="1" fill="#00cc96" opacity="0.45"/><rect x="481.9" y="777.7" width="111.6" height="1" fill="#00cc96" opacity="0.15"/><rect x="481.9" y="782.7" width="111.6" height="1" fill="#00cc96" opacity="0.25"/><rect x="481.9" y="785.2" width="111.6" height="1" fill="#00cc96" opacity="0.15"/><rect x="481.9" y="787.7" width="111.6" height="1" fill="#00cc96" opacity="0.6"/><rect x="481.9" y="790.2" width="111.6" height="1" fill="#00cc96" opacity="0.25"/><rect x="481.9" y="796.2" width="111.6" height="1" fill="#00cc96" opacity="0.35"/><rect x="481.9" y="802.2" width="111.6" height="1" fill="#00cc96" opacity="0.6"/><rect x="481.9" y="804.7" width="111.6" height="1" fill="#00cc96" opacity="0.15"/><rect x="481.9" y="807.2" width="111.6" height="1" fill="#00cc96" opacity="0.15"/><rect x="481.9" y="808.7" width="111.6" height="1" fill="#00cc96" opacity="0.45"/><rect x="481.9" y="811.2" width="111.6" height="1" fill="#00cc96" opacity="0.25"/><rect x="481.9" y="814.2" width="111.6" height="1" fill="#00cc96" opacity="0.35"/><rect x="481.9" y="815.7" width="111.6" height="1" fill="#00cc96" opacity="0.35"/>
<rect x="621.5" y="561.4" width="111.6" height="255.6" fill="#d5b6fa"/>
<rect x="621.5" y="561.4" width="111.6" height="1" fill="#ab63fa" opacity="0.6"/><rect x="621.5" y="564.4" width="111.6" height="1" fill="#ab63fa" opacity="0.35"/><rect x="621.5" y="568.4" width="111.6" height="1" fill="#ab63fa" opacity="0.25"/><rect x="621.5" y="573.4" width="111.6" height="1" fill="#ab63fa" opacity="0.35"/><rect x="621.5" y="574.9" width="111.6" height="1" fill="#ab63fa" opacity="0.6"/><rect x="621.5" y="580.9" width="111.6" height="1" fill="#ab63fa" opacity="0.6"/><rect x="621.5" y="585.9" width="111.6" height="1" fill="#ab63fa" opacity="0.6"/><rect x="621.5" y="588.4" width="111.6" height="1" fill="#ab63fa" opacity="0.6"/><rect x="621.5" y="590.9" width="111.6" height="1" fill="#ab63fa" opacity="0.45"/><rect x="621.5" y="592.4" width="111.6" height="1" fill="#ab63fa" opacity="0.6"/><rect x="621.5" y="594.9" width="111.6" height="1" fill="#ab63fa" opacity="0.25"/><rect x="621.5" y="596.4" width="111.6" height="1" fill="#ab63fa" opacity="0.25"/><rect x="621.5" y="598.9" width="111.6" height="1" fill="#ab63fa" opacity="0.6"/><rect x="621.5" y="604.9" width="111.6" height="1" fill="#ab63fa" opacity="0.6"/><rect x="621.5" y="606.9" width="111.6" height="1" fill="#ab63fa" opacity="0.35"/><rect x="621.5" y="608.4" width="111.6" height="1" fill="#ab63fa" opacity="0.15"/><rect x="621.5" y="614.4" width="111.6" height="1" fill="#ab63fa" opacity="0.25"/><rect x="621.5" y="615.9" width="111.6" height="1" fill="#ab63fa" opacity="0.35"/><rect x="621.5" y="618.9" width="111.6" height="1" fill="#ab63fa" opacity="0.15"/><rect x="621.5" y="620.4" width="111.6" height="1" fill="#ab63fa" opacity="0.6"/><rect x="621.5" y="626.4" width="111.6" height="1" fill="#ab63fa" opacity="0.15"/><rect x="621.5" y="627.9" width="111.6" height="1" fill="#ab63fa" opacity="0.35"/><rect x="621.5" y="633.9" width="111.6" height="1" fill="#ab63fa" opacity="0.35"/><rect x="621.5" y="636.9" width="111.6" height="1" fill="#ab63fa" opacity="0.6"/><rect x="621.5" y="642.9" width="111.6" height="1" fill="#ab63fa" opacity="0.6"/><rect x="621.5" y="648.9" width="111.6" height="1" fill="#ab63fa" opacity="0.6"/><rect x="621.5" y="651.9" width="111.6" height="1" fill="#ab63fa" opacity="0.6"/><rect x="621.5" y="655.4" width="111.6" height="1" fill="#ab63fa" opacity="0.45"/><rect x="621.5" y="658.4" width="111.6" height="1" fill="#ab63fa" opacity="0.45"/><rect x="621.5" y="660.9" width="111.6" height="1" fill="#ab63fa" opacity="0.45"/><rect x="621.5" y="662.9" width="111.6" height="1" fill="#ab63fa" opacity="0.35"/><rect x="621.5" y="668.9" width="111.6" height="1" fill="#ab63fa" opacity="0.25"/><rect x="621.5" y="670.9" width="111.6" height="1" fill="#ab63fa" opacity="0.15"/><rect x="621.5" y="675.9" width="111.6" height="1" fill="#ab63fa" opacity="0.35"/><rect x="621.5" y="678.9" width="111.6" height="1" fill="#ab63fa" opacity="0.25"/><rect x="621.5" y="680.9" width="111.6" height="1" fill="#ab63fa" opacity="0.25"/><rect x="621.5" y="684.9" width="111.6" height="1" fill="#ab63fa" opacity="0.25"/><rect x="621.5" y="688.4" width="111.6" height="1" fill="#ab63fa" opacity="0.25"/><rect x="621.5" y="694.4" width="111.6" height="1" fill="#ab63fa" opacity="0.45"/><rect x="621.5" y="696.4" width="111.6" height="1" fill="#ab63fa" opacity="0.25"/><rect x="621.5" y="702.4" width="111.6" height="1" fill="#ab63fa" opacity="0.25"/><rect x="621.5" y="705.4" width="111.6" height="1" fill="#ab63fa" opacity="0.6"/><rect x="621.5" y="710.4" width="111.6" height="1" fill="#ab63fa" opacity="0.35"/><rect x="621.5" y="715.4" width="111.6" height="1" fill="#ab63fa" opacity="0.25"/><rect x="621.5" y="720.4" width="111.6" height="1" fill="#ab63fa" opacity="0.35"/><rect x="621.5" y="724.4" width="111.6" height="1" fill="#ab63fa" opacity="0.35"/><rect x="621.5" y="726.4" width="111.6" height="1" fill="#ab63fa" opacity="0.35"/><rect x="621.5" y="727.9" width="111.6" height="1" fill="#ab63fa" opacity="0.45"/><rect x="621.5" y="733.9" width="111.6" height="1" fill="#ab63fa" opacity="0.45"/><rect x="621.5" y="735.4" width="111.6" height="1" fill="#ab63fa" opacity="0.6"/><rect x="621.5" y="739.4" width="111.6" height="1" fill="#ab63fa" opacity="0.6"/><rect x="621.5" y="742.9" width="111.6" height="1" fill="#ab63fa" opacity="0.15"/><rect x="621.5" y="744.9" width="111.6" height="1" fill="#ab63fa" opacity="0.15"/><rect x="621.5" y="747.9" width="111.6" height="1" fill="#ab63fa" opacity="0.35"/><rect x="621.5" y="749.9" width="111.6" height="1" fill="#ab63fa" opacity="0.15"/><rect x="621.5" y="753.4" width="111.6" height="1" fill="#ab63fa" opacity="0.35"/><rect x="621.5" y="755.9" width="111.6" height="1" fill="#ab63fa" opacity="0.45"/><rect x="621.5" y="758.4" width="111.6" height="1" fill="#ab63fa" opacity="0.45"/><rect x="621.5" y="761.9" width="111.6" height="1" fill="#ab63fa" opacity="0.6"/><rect x="621.5" y="764.4" width="111.6" height="1" fill="#ab63fa" opacity="0.35"/><rect x="621.5" y="770.4" width="111.6" height="1" fill="#ab63fa" opacity="0.35"/><rect x="621.5" y="772.4" width="111.6" height="1" fill="#ab63fa" opacity="0.25"/><rect x="621.5" y="773.9" width="111.6" height="1" fill="#ab63fa" opacity="0.15"/><rect x="621.5" y="778.9" width="111.6" height="1" fill="#ab63fa" opacity="0.15"/><rect x="621.5" y="782.4" width="111.6" height="1" fill="#ab63fa" opacity="0.35"/><rect x="621.5" y="784.4" width="111.6" height="1" fill="#ab63fa" opacity="0.6"/><rect x="621.5" y="786.4" width="111.6" height="1" fill="#ab63fa" opacity="0.15"/><rect x="621.5" y="789.4" width="111.6" height="1" fill="#ab63fa" opacity="0.15"/><rect x="621.5" y="792.9" width="111.6" height="1" fill="#ab63fa" opacity="0.15"/><rect x="621.5" y="798.9" width="111.6" height="1" fill="#ab63fa" opacity="0.6"/><rect x="621.5" y="802.9" width="111.6" height="1" fill="#ab63fa" opacity="0.35"/><rect x="621.5" y="807.9" width="111.6" height="1" fill="#ab63fa" opacity="0.15"/><rect x="621.5" y="810.4" width="111.6" height="1" fill="#ab63fa" opacity="0.15"/><rect x="621.5" y="813.4" width="111.6" height="1" fill="#ab63fa" opacity="0.35"/><rect x="621.5" y="815.9" width="111.6" height="1" fill="#ab63fa" opacity="0.25"/>
<rect x="761.0" y="612.6" width="111.6" height="204.4" fill="#f9d0b0"/>
<rect x="761.0" y="612.6" width="111.6" height="1" fill="#ffa15a" opacity="0.35"/><rect x="761.0" y="615.6" width="111.6" height="1" fill="#ffa15a" opacity="0.6"/><rect x="761.0" y="619.1" width="111.6" height="1" fill="#ffa15a" opacity="0.35"/><rect x="761.0" y="622.1" width="111.6" height="1" fill="#ffa15a" opacity="0.6"/><rect x="761.0" y="628.1" width="111.6" height="1" fill="#ffa15a" opacity="0.35"/><rect x="761.0" y="630.6" width="111.6" height="1" fill="#ffa15a" opacity="0.15"/><rect x="761.0" y="634.6" width="111.6" height="1" fill="#ffa15a" opacity="0.15"/><rect x="761.0" y="638.1" width="111.6" height="1" fill="#ffa15a" opacity="0.15"/><rect x="761.0" y="639.6" width="111.6" height="1" fill="#ffa15a" opacity="0.6"/><rect x="761.0" y="642.6" width="111.6" height="1" fill="#ffa15a" opacity="0.25"/><rect x="761.0" y="648.6" width="111.6" height="1" fill="#ffa15a" opacity="0.15"/><rect x="761.0" y="654.6" width="111.6" height="1" fill="#ffa15a" opacity="0.45"/><rect x="761.0" y="659.6" width="111.6" height="1" fill="#ffa15a" opacity="0.6"/><rect x="761.0" y="664.6" width="111.6" height="1" fill="#ffa15a" opacity="0.25"/><rect x="761.0" y="668.1" width="111.6" height="1" fill="#ffa15a" opacity="0.35"/><rect x="761.0" y="671.1" width="111.6" height="1" fill="#ffa15a" opacity="0.25"/><rect x="761.0" y="674.1" width="111.6" height="1" fill="#ffa15a" opacity="0.35"/><rect x="761.0" y="679.1" width="111.6" height="1" fill="#ffa15a" opacity="0.25"/><rect x="761.0" y="680.6" width="111.6" height="1" fill="#ffa15a" opacity="0.15"/><rect x="761.0" y="682.1" width="111.6" height="1" fill="#ffa15a" opacity="0.45"/><rect x="761.0" y="685.6" width="111.6" height="1" fill="#ffa15a" opacity="0.15"/><rect x="761.0" y="688.1" width="111.6" height="1" fill="#ffa15a" opacity="0.45"/><rect x="761.0" y="690.1" width="111.6" height="1" fill="#ffa15a" opacity="0.6"/><rect x="761.0" y="693.6" width="111.6" height="1" fill="#ffa15a" opacity="0.35"/><rect x="761.0" y="696.6" width="111.6" height="1" fill="#ffa15a" opacity="0.45"/><rect x="761.0" y="698.1" width="111.6" height="1" fill="#ffa15a" opacity="0.25"/><rect x="761.0" y="700.6" width="111.6" height="1" fill="#ffa15a" opacity="0.45"/><rect x="761.0" y="704.1" width="111.6" height="1" fill="#ffa15a" opacity="0.35"/><rect x="761.0" y="705.6" width="111.6" height="1" fill="#ffa15a" opacity="0.35"/><rect x="761.0" y="709.6" width="111.6" height="1" fill="#ffa15a" opacity="0.25"/><rect x="761.0" y="713.6" width="111.6" height="1" fill="#ffa15a" opacity="0.35"/><rect x="761.0" y="715.1" width="111.6" height="1" fill="#ffa15a" opacity="0.35"/><rect x="761.0" y="718.1" width="111.6" height="1" fill="#ffa15a" opacity="0.15"/><rect x="761.0" y="720.6" width="111.6" height="1" fill="#ffa15a" opacity="0.45"/><rect x="761.0" y="724.6" width="111.6" height="1" fill="#ffa15a" opacity="0.45"/><rect x="761.0" y="726.6" width="111.6" height="1" fill="#ffa15a" opacity="0.6"/><rect x="761.0" y="730.1" width="111.6" height="1" fill="#ffa15a" opacity="0.25"/><rect x="761.0" y="733.1" width="111.6" height="1" fill="#ffa15a" opacity="0.15"/><rect x="761.0" y="734.6" width="111.6" height="1" fill="#ffa15a" opacity="0.15"/><rect x="761.0" y="738.1" width="111.6" height="1" fill="#ffa15a" opacity="0.45"/><rect x="761.0" y="740.6" width="111.6" height="1" fill="#ffa15a" opacity="0.45"/><rect x="761.0" y="742.1" width="111.6" height="1" fill="#ffa15a" opacity="0.35"/><rect x="761.0" y="743.6" width="111.6" height="1" fill="#ffa15a" opacity="0.25"/><rect x="761.0" y="747.1" width="111.6" height="1" fill="#ffa15a" opacity="0.6"/><rect x="761.0" y="749.1" width="111.6" height="1" fill="#ffa15a" opacity="0.6"/><rect x="761.0" y="751.6" width="111.6" height="1" fill="#ffa15a" opacity="0.35"/><rect x="761.0" y="756.6" width="111.6" height="1" fill="#ffa15a" opacity="0.25"/><rect x="761.0" y="762.6" width="111.6" height="1" fill="#ffa15a" opacity="0.6"/><rect x="761.0" y="766.1" width="111.6" height="1" fill="#ffa15a" opacity="0.15"/><rect x="761.0" y="768.6" width="111.6" height="1" fill="#ffa15a" opacity="0.6"/><rect x="761.0" y="773.6" width="111.6" height="1" fill="#ffa15a" opacity="0.6"/><rect x="761.0" y="776.1" width="111.6" height="1" fill="#ffa15a" opacity="0.6"/><rect x="761.0" y="777.6" width="111.6" height="1" fill="#ffa15a" opacity="0.15"/><rect x="761.0" y="780.6" width="111.6" height="1" fill="#ffa15a" opacity="0.15"/><rect x="761.0" y="782.1" width="111.6" height="1" fill="#ffa15a" opacity="0.35"/><rect x="761.0" y="784.6" width="111.6" height="1" fill="#ffa15a" opacity="0.45"/><rect x="761.0" y="786.6" width="111.6" height="1" fill="#ffa15a" opacity="0.6"/><rect x="761.0" y="792.6" width="111.6" height="1" fill="#ffa15a" opacity="0.15"/><rect x="761.0" y="794.1" width="111.6" height="1" fill="#ffa15a" opacity="0.45"/><rect x="761.0" y="797.1" width="111.6" height="1" fill="#ffa15a" opacity="0.15"/><rect x="761.0" y="800.6" width="111.6" height="1" fill="#ffa15a" opacity="0.15"/><rect x="761.0" y="806.6" width="111.6" height="1" fill="#ffa15a" opacity="0.6"/><rect x="761.0" y="808.6" width="111.6" height="1" fill="#ffa15a" opacity="0.45"/><rect x="761.0" y="810.6" width="111.6" height="1" fill="#ffa15a" opacity="0.15"/><rect x="761.0" y="814.1" width="111.6" height="1" fill="#ffa15a" opacity="0.25"/>
<rect x="900.5" y="624.2" width="111.6" height="192.8" fill="#96e6f6"/>
<rect x="900.5" y="624.2" width="111.6" height="1" fill="#19d3f3" opacity="0.25"/><rect x="900.5" y="627.2" width="111.6" height="1" fill="#19d3f3" opacity="0.45"/><rect x="900.5" y="633.2" width="111.6" height="1" fill="#19d3f3" opacity="0.15"/><rect x="900.5" y="638.2" width="111.6" height="1" fill="#19d3f3" opacity="0.35"/><rect x="900.5" y="644.2" width="111.6" height="1" fill="#19d3f3" opacity="0.6"/><rect x="900.5" y="645.7" width="111.6" height="1" fill="#19d3f3" opacity="0.15"/><rect x="900.5" y="648.7" width="111.6" height="1" fill="#19d3f3" opacity="0.35"/><rect x="900.5" y="651.2" width="111.6" height="1" fill="#19d3f3" opacity="0.35"/><rect x="900.5" y="654.7" width="111.6" height="1" fill="#19d3f3" opacity="0.15"/><rect x="900.5" y="657.2" width="111.6" height="1" fill="#19d3f3" opacity="0.15"/><rect x="900.5" y="663.2" width="111.6" height="1" fill="#19d3f3" opacity="0.35"/><rect x="900.5" y="669.2" width="111.6" height="1" fill="#19d3f3" opacity="0.25"/><rect x="900.5" y="671.2" width="111.6" height="1" fill="#19d3f3" opacity="0.35"/><rect x="900.5" y="677.2" width="111.6" height="1" fill="#19d3f3" opacity="0.45"/><rect x="900.5" y="680.7" width="111.6" height="1" fill="#19d3f3" opacity="0.45"/><rect x="900.5" y="686.7" width="111.6" height="1" fill="#19d3f3" opacity="0.6"/><rect x="900.5" y="688.7" width="111.6" height="1" fill="#19d3f3" opacity="0.35"/><rect x="900.5" y="691.7" width="111.6" height="1" fill="#19d3f3" opacity="0.45"/><rect x="900.5" y="693.7" width="111.6" height="1" fill="#19d3f3" opacity="0.35"/><rect x="900.5" y="695.2" width="111.6" height="1" fill="#19d3f3" opacity="0.15"/><rect x="900.5" y="701.2" width="111.6" height="1" fill="#19d3f3" opacity="0.35"/><rect x="900.5" y="707.2" width="111.6" height="1" fill="#19d3f3" opacity="0.25"/><rect x="900.5" y="712.2" width="111.6" height="1" fill="#19d3f3" opacity="0.15"/><rect x="900.5" y="715.2" width="111.6" height="1" fill="#19d3f3" opacity="0.25"/><rect x="900.5" y="717.2" width="111.6" height="1" fill="#19d3f3" opacity="0.35"/><rect x="900.5" y="720.7" width="111.6" height="1" fill="#19d3f3" opacity="0.6"/><rect x="900.5" y="723.2" width="111.6" height="1" fill="#19d3f3" opacity="0.15"/><rect x="900.5" y="726.7" width="111.6" height="1" fill="#19d3f3" opacity="0.25"/><rect x="900.5" y="730.7" width="111.6" height="1" fill="#19d3f3" opacity="0.45"/><rect x="900.5" y="736.7" width="111.6" height="1" fill="#19d3f3" opacity="0.15"/><rect x="900.5" y="741.7" width="111.6" height="1" fill="#19d3f3" opacity="0.15"/><rect x="900.5" y="744.2" width="111.6" height="1" fill="#19d3f3" opacity="0.45"/><rect x="900.5" y="750.2" width="111.6" height="1" fill="#19d3f3" opacity="0.35"/><rect x="900.5" y="755.2" width="111.6" height="1" fill="#19d3f3" opacity="0.45"/><rect x="900.5" y="757.7" width="111.6" height="1" fill="#19d3f3" opacity="0.45"/><rect x="900.5" y="761.7" width="111.6" height="1" fill="#19d3f3" opacity="0.15"/><rect x="900.5" y="765.7" width="111.6" height="1" fill="#19d3f3" opacity="0.15"/><rect x="900.5" y="769.7" width="111.6" height="1" fill="#19d3f3" opacity="0.35"/><rect x="900.5" y="773.7" width="111.6" height="1" fill="#19d3f3" opacity="0.15"/><rect x="900.5" y="778.7" width="111.6" height="1" fill="#19d3f3" opacity="0.15"/><rect x="900.5" y="781.7" width="111.6" height="1" fill="#19d3f3" opacity="0.35"/><rect x="900.5" y="785.2" width="111.6" height="1" fill="#19d3f3" opacity="0.15"/><rect x="900.5" y="789.2" width="111.6" height="1" fill="#19d3f3" opacity="0.45"/><rect x="900.5" y="794.2" width="111.6" height="1" fill="#19d3f3" opacity="0.35"/><rect x="900.5" y="796.2" width="111.6" height="1" fill="#19d3f3" opacity="0.35"/><rect x="900.5" y="801.2" width="111.6" height="1" fill="#19d3f3" opacity="0.35"/><rect x="900.5" y="802.7" width="111.6" height="1" fill="#19d3f3" opacity="0.15"/><rect x="900.5" y="804.7" width="111.6" height="1" fill="#19d3f3" opacity="0.25"/><rect x="900.5" y="808.2" width="111.6" height="1" fill="#19d3f3" opacity="0.35"/><rect x="900.5" y="811.2" width="111.6" height="1" fill="#19d3f3" opacity="0.6"/>
<g font-family="Liberation Sans"><text x="166.9" y="497.8" font-size="16" textLength="322.3" lengthAdjust="spacingAndGlyphs" fill="#3a4860" >Average Scores by Parental Education</text><text x="180.7" y="822.1" font-size="12" textLength="7.3" lengthAdjust="spacingAndGlyphs" fill="#3a4860" >0</text><text x="174.0" y="739.5" font-size="12" textLength="14.0" lengthAdjust="spacingAndGlyphs" fill="#3a4860" >5k</text><text x="166.7" y="656.9" font-size="12" textLength="21.3" lengthAdjust="spacingAndGlyphs" fill="#3a4860" >10k</text><text x="166.7" y="574.3" font-size="12" textLength="21.3" lengthAdjust="spacingAndGlyphs" fill="#3a4860" >15k</text><text x="205.5" y="830.7" font-size="12" textLength="106.4" lengthAdjust="spacingAndGlyphs" fill="#3a4860" >bachelor&#39;s degree</text><text x="358.7" y="830.7" font-size="12" textLength="79.2" lengthAdjust="spacingAndGlyphs" fill="#3a4860" >some college</text><text x="489.8" y="830.7" font-size="12" textLength="95.9" lengthAdjust="spacingAndGlyphs" fill="#3a4860" >master&#39;s degree</text><text x="621.4" y="830.7" font-size="12" textLength="111.6" lengthAdjust="spacingAndGlyphs" fill="#3a4860" >associate&#39;s degree</text><text x="782.8" y="830.7" font-size="12" textLength="68.0" lengthAdjust="spacingAndGlyphs" fill="#3a4860" >high school</text><text x="904.0" y="830.7" font-size="12" textLength="104.6" lengthAdjust="spacingAndGlyphs" fill="#3a4860" >some high school</text><text x="514.6" y="857.1" font-size="13.5" textLength="185.6" lengthAdjust="spacingAndGlyphs" fill="#3a4860" >parental level of education</text><text x="1045.7" y="565.8" font-size="13.5" textLength="185.3" lengthAdjust="spacingAndGlyphs" fill="#3a4860" >parental level of education</text><rect x="1057" y="575.4" width="11.6" height="11" fill="#636efa"/><text x="1083.0" y="584.7" font-size="12" textLength="106.4" lengthAdjust="spacingAndGlyphs" fill="#3a4860" >bachelor&#39;s degree</text><rect x="1057" y="594.3" width="11.6" height="11" fill="#ef553b"/><text x="1083.0" y="603.6" font-size="12" textLength="79.2" lengthAdjust="spacingAndGlyphs" fill="#3a4860" >some college</text><rect x="1057" y="613.1" width="11.6" height="11" fill="#00cc96"/><text x="1083.0" y="622.4" font-size="12" textLength="95.9" lengthAdjust="spacingAndGlyphs" fill="#3a4860" >master&#39;s degree</text><rect x="1057" y="632.0" width="11.6" height="11" fill="#ab63fa"/><text x="1083.0" y="641.3" font-size="12" textLength="111.6" lengthAdjust="spacingAndGlyphs" fill="#3a4860" >associate&#39;s degree</text><rect x="1057" y="650.8" width="11.6" height="11" fill="#ffa15a"/><text x="1083.0" y="660.1" font-size="12" textLength="68.0" lengthAdjust="spacingAndGlyphs" fill="#3a4860" >high school</text><rect x="1057" y="669.7" width="11.6" height="11" fill="#19d3f3"/><text x="1083.0" y="679.0" font-size="12" textLength="104.6" lengthAdjust="spacingAndGlyphs" fill="#3a4860" >some high school</text><text transform="translate(146,683) rotate(-90)" x="-35.0" y="0" font-size="13.5" textLength="70" lengthAdjust="spacingAndGlyphs" fill="#3a4860">avg_score</text></g></svg>
<!--/CHART-->


<!-- ===== DASH DEBUG PANEL ===== -->
<div class="a" style="left:819px;top:921px;width:436px;height:51px;background:#f5f6f9;border-radius:6px 6px 0 0"></div>
<svg style="left:0;top:0" width="1280" height="994" viewBox="0 0 1280 994">
 <path d="M849 947.8L854.3 956.6H843.7Z M849 950.5V953.3M849 954.6V955.3" stroke="#a07fd0" stroke-width="1" fill="none" stroke-linejoin="round"/>
 <text x="862" y="957.8" font-family="Liberation Sans" font-weight="bold" font-size="13.2" textLength="47.3" lengthAdjust="spacingAndGlyphs" fill="#7e4ec2">Errors</text>
 <rect x="835" y="965" width="83" height="2.2" fill="#1b75a8"/>
 <rect x="918" y="965.3" width="105.5" height="1" fill="#d8dbe0"/>
 <g stroke="#111" stroke-width="1.2" fill="none"><circle cx="929.5" cy="948.5" r="1.4"/><circle cx="934.6" cy="950.6" r="1.4"/><circle cx="934.5" cy="954.6" r="1.4"/><circle cx="927.4" cy="955" r="1.4"/><path d="M930.3 949.8L931.2 952.5L933.3 951.2M931.2 952.5L933.4 953.8M931.2 952.5L928.5 954"/></g>
 <text x="942.2" y="957.8" font-family="Liberation Sans" font-weight="bold" font-size="13.2" textLength="73.2" lengthAdjust="spacingAndGlyphs" fill="#111">Callbacks</text>
 <rect x="1037" y="939.5" width="1" height="25" fill="#c9ccd2"/>
 <text x="1052" y="957.8" font-family="Liberation Sans" font-size="13.2" textLength="44" lengthAdjust="spacingAndGlyphs" fill="#222">v3.2.0</text>
 <rect x="1110" y="939.5" width="1" height="25" fill="#c9ccd2"/>
 <text x="1124.7" y="957.8" font-family="Liberation Sans" font-size="13.2" textLength="45.1" lengthAdjust="spacingAndGlyphs" fill="#222">Server</text>
 <circle cx="1186" cy="952" r="7.6" stroke="#6e9b3c" stroke-width="1.3" fill="none"/>
 <path d="M1182.3 952.2L1185 954.8L1189.8 949.3" stroke="#6e9b3c" stroke-width="1.2" fill="none"/>
 <rect x="1208" y="939.5" width="1" height="25" fill="#c9ccd2"/>
 <circle cx="1232" cy="952" r="11.2" stroke="#8244c8" stroke-width="1.9" fill="none"/>
 <path d="M1226.5 947.5L1230.5 951.8L1226.5 956M1232.5 947.5L1236.5 951.8L1232.5 956" stroke="#6f3fb6" stroke-width="2" fill="none"/>
</svg>

<!-- ===== STATUS BAR ===== -->
<div class="hl" style="left:0;top:972px;width:1280px"></div>
<svg style="left:12px;top:977px" width="11" height="12" viewBox="0 0 11 12"><path d="M0.8 5L4.5 8.2L0.8 11.5M10 0.8L6.3 4L10 7.3" stroke="#fff" stroke-width="1.1" fill="none"/></svg>
<svg style="left:42px;top:977px" width="13" height="13" viewBox="0 0 13 13"><circle cx="6.5" cy="6.5" r="5.8" stroke="#fff" stroke-width="1.1" fill="none"/><path d="M4.2 4.2L8.8 8.8M8.8 4.2L4.2 8.8" stroke="#fff" stroke-width="1.1"/></svg>
<div class="a" style="left:59px;top:977px;font-size:12px;line-height:12px">0</div>
<svg style="left:70px;top:977px" width="12" height="12" viewBox="0 0 12 12"><path d="M6 0.8L11.3 11.3H0.7Z M6 4V8M6 9.2V10.4" stroke="#fff" stroke-width="1.1" fill="none" stroke-linejoin="round"/></svg>
<div class="a" style="left:86px;top:977px;font-size:12px;line-height:12px">0</div>
<div class="a" style="left:1044px;top:977px;font-size:12px;line-height:12px;letter-spacing:-0.45px">Spaces: 4</div>
<div class="a" style="left:1110px;top:977px;font-size:12px;line-height:12px">{ }</div>
<svg style="left:1138px;top:977px" width="16" height="13" viewBox="0 0 18 16">
 <rect x="1.6" y="1" width="14.6" height="8" rx="3.2" fill="#fff"/>
 <rect x="0.8" y="5" width="16.2" height="10" rx="4.8" fill="#fff"/>
 <rect x="4" y="2.9" width="3.3" height="3.1" rx="1" fill="#000"/>
 <rect x="10.3" y="2.9" width="3.4" height="3.1" rx="1" fill="#000"/>
 <rect x="4.2" y="8.1" width="9.2" height="4.4" rx="1" fill="#000"/>
 <rect x="6" y="9" width="1.6" height="2.6" fill="#fff"/>
 <rect x="10.4" y="9" width="1.6" height="2.6" fill="#fff"/>
</svg>
<div class="a" style="left:1169px;top:977px;font-size:12px;line-height:12px;letter-spacing:-0.15px">Cell 20 of 21</div>
<svg style="left:1252px;top:976px" width="13" height="14" viewBox="0 0 13 14"><path d="M2 10V6A4.5 4.5 0 0 1 11 6V10L12.3 11.3H0.7Z M4.8 12.5A1.7 1.7 0 0 0 8.2 12.5" stroke="#fff" stroke-width="1.1" fill="none"/></svg>


<!-- ===== WATERMARK ===== -->
<svg style="left:0;top:0" width="1280" height="994" viewBox="0 0 1280 994">
 <g stroke="#595959" fill="none" stroke-linecap="round" stroke-linejoin="round">
  <path d="M588.6 908V940" stroke-width="6"/>
  <path d="M580 922C570 922 566 930 567 936C568 941 574 943.5 584 943.5" stroke-width="6"/>
  <path d="M586 940.5H676" stroke-width="7" stroke-linecap="butt"/>
  <circle cx="612.4" cy="927.5" r="7.6" stroke-width="6"/>
  <path d="M619.9 928V943" stroke-width="6"/>
  <path d="M667.2 925V940M678.6 925V940" stroke-width="6"/>
  <circle cx="702.9" cy="931.5" r="10" stroke-width="6"/>
 </g>
 <g fill="#595959">
  <circle cx="608.6" cy="907.8" r="3.8"/><circle cx="619.9" cy="907.8" r="3.8"/><circle cx="635.5" cy="916.9" r="4"/>
  <circle cx="641.9" cy="927.6" r="3.5"/><circle cx="656.3" cy="927.6" r="3.5"/>
 </g>
 <g stroke="#c6c6c6" fill="none" stroke-linecap="round" stroke-linejoin="round">
  <path d="M583 930.3H578C571 930.3 567.8 934.5 567.8 939.8C567.8 945 571 949.5 578 949.5H706C710.5 949.5 712.8 946 712.8 942V932" stroke-width="8"/>
  <path d="M628 916V949" stroke-width="7.5"/>
  <path d="M599.5 949V935C599.5 931 602 929.4 606 929.4C610 929.4 612.8 931 612.8 935V949" stroke-width="8"/>
  <path d="M639 932.8H654V947" stroke-width="8"/>
  <circle cx="689.1" cy="940" r="7.8" stroke-width="7"/>
 </g>
 <g fill="#c6c6c6">
  <circle cx="647.5" cy="919.7" r="5"/><circle cx="688.2" cy="919.7" r="5"/><circle cx="711.5" cy="919.7" r="5"/>
 </g>
 <circle cx="689.1" cy="940" r="3.3" fill="#595959"/>
 <text x="563" y="968.4" font-family="Liberation Sans" font-size="23" stroke="#5e5e5e" stroke-width="0.5" textLength="153" lengthAdjust="spacingAndGlyphs" fill="#5e5e5e">mostaql.com</text>
 <circle cx="579" cy="963" r="4.6" fill="#c8c8c8"/><circle cx="590.5" cy="963" r="4.6" fill="#c8c8c8"/>
 <text x="569" y="987.6" font-family="Liberation Sans" font-size="24.5" stroke="#c8c8c8" stroke-width="0.4" textLength="142" lengthAdjust="spacingAndGlyphs" fill="#c8c8c8">nafezly.com</text>
</svg>
</body></html>
